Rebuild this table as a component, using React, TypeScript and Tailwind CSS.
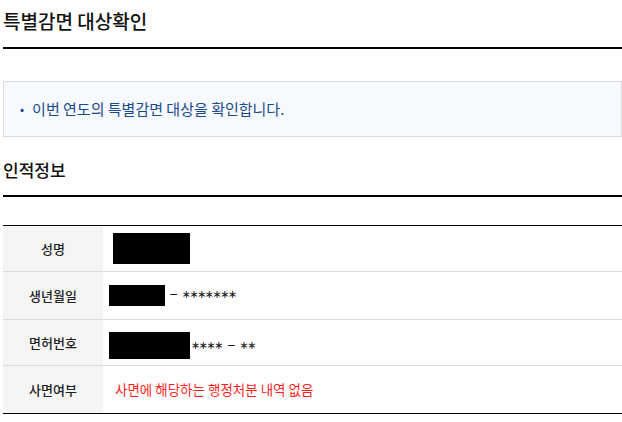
import React from "react";

const font = { fontFamily: '"Noto Sans CJK KR", "Noto Sans", sans-serif' };
const maskFont = { fontFamily: '"DejaVu Sans", "Noto Sans CJK KR", sans-serif' };

function Row({
  label,
  h,
  children,
  last,
}: {
  label: string;
  h: string;
  children: React.ReactNode;
  last?: boolean;
}) {
  return (
    <div className={`flex ${h} ${last ? "border-b border-black" : "border-b border-[#dcdcdc]"}`}>
      <div className="w-[100px] shrink-0 bg-[#f5f5f5] flex items-center justify-center text-[13px] font-medium text-[#222]">
        {label}
      </div>
      <div className="flex-1 flex items-center">{children}</div>
    </div>
  );
}

export default function App() {
  return (
    <div className="w-[622px] h-[422px] bg-white pl-[3px] overflow-hidden" style={font}>
      <div className="pt-[8px] pb-[13px] border-b-2 border-black">
        <h1 className="text-[19px] leading-[26px] font-medium text-[#111]">특별감면 대상확인</h1>
      </div>

      <div className="mt-[32px] border border-[#dcdcdc] bg-[#f6f9fd] py-[17px] pl-[16px]">
        <p className="text-[15px] leading-[20px] text-[#1b4a8c] flex items-center">
          <span className="mr-[8px] text-[12px]">•</span>
          이번 연도의 특별감면 대상을 확인합니다.
        </p>
      </div>

      <div className="pt-[21px] pb-[13px] border-b-2 border-black">
        <h2 className="text-[17px] leading-[24px] font-medium text-[#111]">인적정보</h2>
      </div>

      <div className="mt-[28px] border-t border-black">
        <Row label="성명" h="h-[46px]">
          <div className="ml-[10px] w-[77px] h-[31px] bg-black" />
        </Row>
        <Row label="생년월일" h="h-[48px]">
          <div className="ml-[6px] w-[56px] h-[21px] bg-black" />
          <span className="ml-[4px] text-[11px] text-[#111] tracking-[-1.5px] [word-spacing:3px]" style={maskFont}>− ∗∗∗∗∗∗∗</span>
        </Row>
        <Row label="면허번호" h="h-[46px]">
          <div className="ml-[6px] mt-[6px] w-[81px] h-[27px] bg-black" />
          <span className="ml-[1px] mt-[8px] text-[11px] text-[#111] tracking-[-1.5px] [word-spacing:3px]" style={maskFont}>∗∗∗∗ − ∗∗</span>
        </Row>
        <Row label="사면여부" h="h-[48px]" last>
          <span className="ml-[12px] text-[13.5px] text-[#ff1f1f]">사면에 해당하는 행정처분 내역 없음</span>
        </Row>
      </div>
    </div>
  );
}
